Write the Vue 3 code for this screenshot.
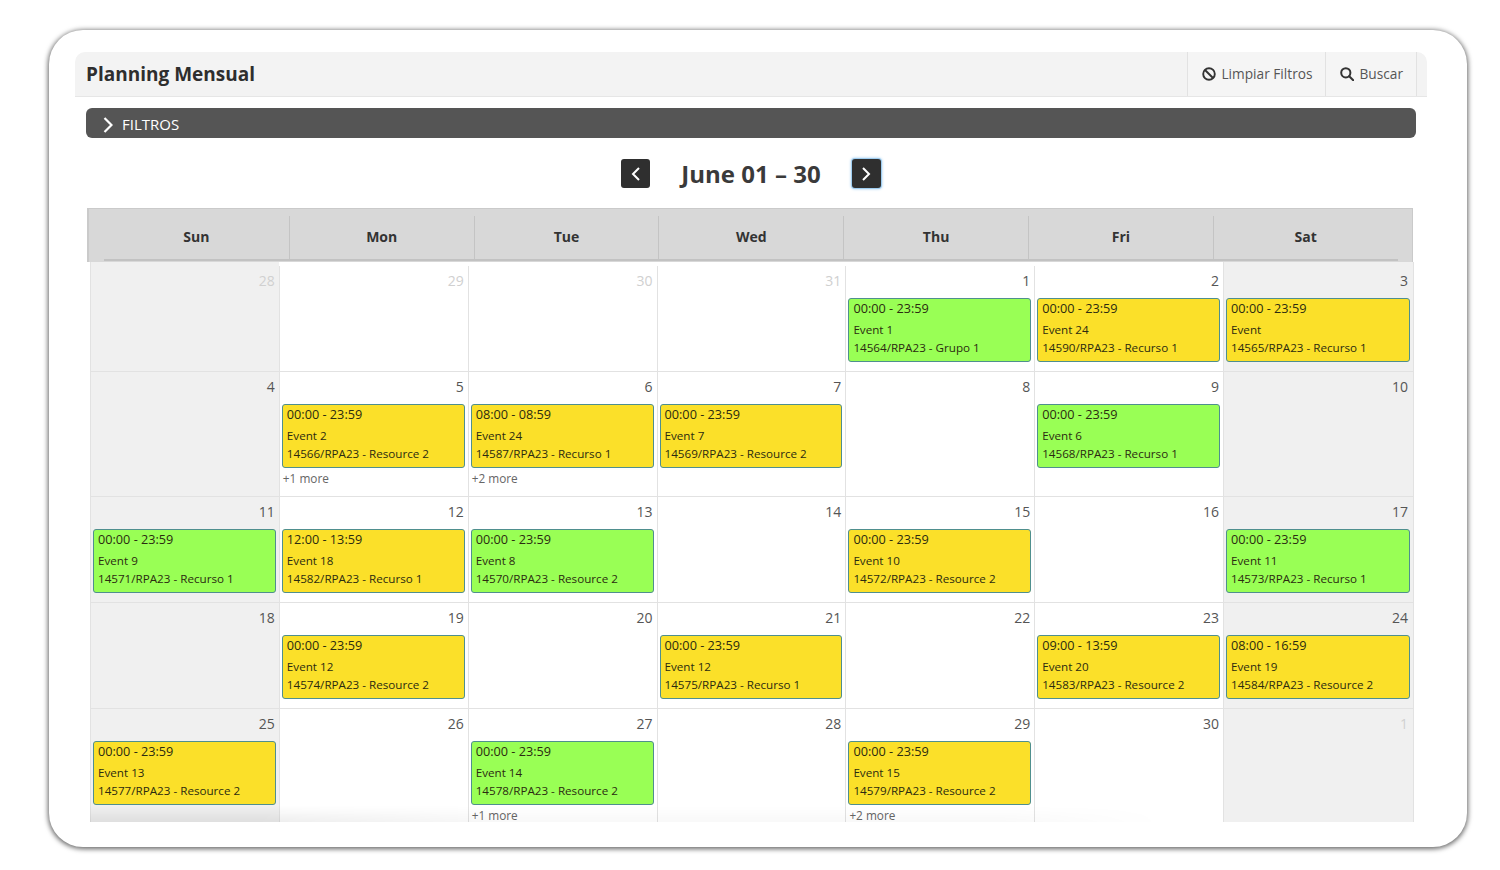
<script setup>
const dayNames = ['Sun', 'Mon', 'Tue', 'Wed', 'Thu', 'Fri', 'Sat']

const ev = (time, name, ref, color) => ({ time, name, ref, color })

const weeks = [
  [
    { n: 28, off: true }, { n: 29, off: true }, { n: 30, off: true }, { n: 31, off: true },
    { n: 1, event: ev('00:00 - 23:59', 'Event 1', '14564/RPA23 - Grupo 1', 'green') },
    { n: 2, event: ev('00:00 - 23:59', 'Event 24', '14590/RPA23 - Recurso 1', 'yellow') },
    { n: 3, event: ev('00:00 - 23:59', 'Event', '14565/RPA23 - Recurso 1', 'yellow') },
  ],
  [
    { n: 4 },
    { n: 5, event: ev('00:00 - 23:59', 'Event 2', '14566/RPA23 - Resource 2', 'yellow'), more: '+1 more' },
    { n: 6, event: ev('08:00 - 08:59', 'Event 24', '14587/RPA23 - Recurso 1', 'yellow'), more: '+2 more' },
    { n: 7, event: ev('00:00 - 23:59', 'Event 7', '14569/RPA23 - Resource 2', 'yellow') },
    { n: 8 },
    { n: 9, event: ev('00:00 - 23:59', 'Event 6', '14568/RPA23 - Recurso 1', 'green') },
    { n: 10 },
  ],
  [
    { n: 11, event: ev('00:00 - 23:59', 'Event 9', '14571/RPA23 - Recurso 1', 'green') },
    { n: 12, event: ev('12:00 - 13:59', 'Event 18', '14582/RPA23 - Recurso 1', 'yellow') },
    { n: 13, event: ev('00:00 - 23:59', 'Event 8', '14570/RPA23 - Resource 2', 'green') },
    { n: 14 },
    { n: 15, event: ev('00:00 - 23:59', 'Event 10', '14572/RPA23 - Resource 2', 'yellow') },
    { n: 16 },
    { n: 17, event: ev('00:00 - 23:59', 'Event 11', '14573/RPA23 - Recurso 1', 'green') },
  ],
  [
    { n: 18 },
    { n: 19, event: ev('00:00 - 23:59', 'Event 12', '14574/RPA23 - Resource 2', 'yellow') },
    { n: 20 },
    { n: 21, event: ev('00:00 - 23:59', 'Event 12', '14575/RPA23 - Recurso 1', 'yellow') },
    { n: 22 },
    { n: 23, event: ev('09:00 - 13:59', 'Event 20', '14583/RPA23 - Resource 2', 'yellow') },
    { n: 24, event: ev('08:00 - 16:59', 'Event 19', '14584/RPA23 - Resource 2', 'yellow') },
  ],
  [
    { n: 25, event: ev('00:00 - 23:59', 'Event 13', '14577/RPA23 - Resource 2', 'yellow') },
    { n: 26 },
    { n: 27, event: ev('00:00 - 23:59', 'Event 14', '14578/RPA23 - Resource 2', 'green'), more: '+1 more' },
    { n: 28 },
    { n: 29, event: ev('00:00 - 23:59', 'Event 15', '14579/RPA23 - Resource 2', 'yellow'), more: '+2 more' },
    { n: 30 },
    { n: 1, off: true },
  ],
]
</script>

<template>
  <div class="page">
    <div class="frame">
      <header class="topbar">
        <h1>Planning Mensual</h1>
        <div class="actions">
          <button class="action">
            <svg width="14" height="14" viewBox="0 0 14 14" fill="none" stroke="#333" stroke-width="1.9">
              <circle cx="7" cy="7" r="5.8" />
              <path d="M3 3l8 8" />
            </svg>
            Limpiar Filtros
          </button>
          <button class="action">
            <svg width="14" height="14" viewBox="0 0 14 14" fill="none" stroke="#333" stroke-width="2">
              <circle cx="5.8" cy="5.8" r="4.6" />
              <path d="M9.2 9.2l4 4" stroke-linecap="round" />
            </svg>
            Buscar
          </button>
        </div>
      </header>

      <div class="content">
        <div class="filters">
          <svg width="10" height="16" viewBox="0 0 10 16" fill="none" stroke="#fff" stroke-width="2.2">
            <path d="M1.5 1l7 7-7 7" />
          </svg>
          <span>FILTROS</span>
        </div>

        <div class="nav">
          <button class="nav-btn">
            <svg width="10" height="14" viewBox="0 0 10 14" fill="none" stroke="#fff" stroke-width="2">
              <path d="M8 1L2 7l6 6" />
            </svg>
          </button>
          <h2>June 01 – 30</h2>
          <button class="nav-btn focused">
            <svg width="10" height="14" viewBox="0 0 10 14" fill="none" stroke="#fff" stroke-width="2">
              <path d="M2 1l6 6-6 6" />
            </svg>
          </button>
        </div>

        <div class="calendar">
          <div class="head">
            <div class="head-row">
              <div v-for="day in dayNames" :key="day" class="head-cell">{{ day }}</div>
            </div>
          </div>

          <div class="body">
            <div v-for="(week, w) in weeks" :key="w" class="week">
              <div
                v-for="(cell, c) in week"
                :key="c"
                class="cell"
                :class="{ weekend: c === 0 || c === 6 }"
              >
                <div class="date" :class="{ off: cell.off }">{{ cell.n }}</div>
                <div v-if="cell.event" class="event" :class="cell.event.color">
                  <div class="time">{{ cell.event.time }}</div>
                  <div class="name">{{ cell.event.name }}</div>
                  <div class="ref">{{ cell.event.ref }}</div>
                </div>
                <div v-if="cell.more" class="more">{{ cell.more }}</div>
              </div>
            </div>
            <div class="fade"></div>
          </div>
        </div>
      </div>
    </div>
  </div>
</template>

<style scoped>
.page {
  box-sizing: border-box;
  height: 870px;
  padding: 30px 0 0 49px;
}

.frame {
  box-sizing: border-box;
  width: 1418px;
  height: 817px;
  padding: 22px 40px 0 26px;
  background: #fff;
  border-radius: 34px;
  box-shadow: 0 1px 5px 1px rgba(0, 0, 0, 0.6);
  overflow: hidden;
  color: #333;
}

.topbar {
  display: flex;
  justify-content: space-between;
  align-items: stretch;
  height: 45px;
  padding-left: 11px;
  padding-right: 10px;
  background: #f3f3f3;
  border-bottom: 1px solid #e6e6e6;
  border-radius: 10px 10px 0 0;
  box-sizing: border-box;
}

h1 {
  margin: 0;
  align-self: center;
  font-size: 19px;
  font-weight: 700;
  color: #2e2e2e;
}

.actions {
  display: flex;
}

.action {
  display: flex;
  align-items: center;
  gap: 5px;
  padding: 0 13px 1px 14px;
  border: 0;
  border-left: 1px solid #e2e2e2;
  background: #f5f5f5;
  font: 13.7px "Open Sans", sans-serif;
  color: #555;
}

.action:last-child {
  border-right: 1px solid #e2e2e2;
}

.content {
  padding: 11px 11px 0;
}

.filters {
  display: flex;
  align-items: center;
  gap: 9px;
  height: 30px;
  padding-left: 17px;
  background: #555;
  border-radius: 6px;
  color: #fff;
  font-size: 15px;
  box-sizing: border-box;
}

.filters svg {
  margin-top: 3px;
}

.filters span {
  padding-top: 1px;
}

.nav {
  display: flex;
  justify-content: center;
  align-items: center;
  gap: 31px;
  height: 29px;
  margin: 21px 0 20px;
}

.nav-btn {
  display: flex;
  align-items: center;
  justify-content: center;
  width: 29px;
  height: 29px;
  padding: 0;
  border: 0;
  border-radius: 3px;
  background: #2f2f2f;
}

.nav-btn.focused {
  box-shadow: 0 0 0 1px #9fcdf0, 0 0 3px 1px #9fcdf0;
}

h2 {
  margin: 0;
  font-size: 24px;
  font-weight: 700;
  color: #3a3a3a;
}

.calendar {
  margin-left: 1px;
  width: 1326px;
}

.head {
  box-sizing: border-box;
  height: 54px;
  padding: 7px 14px 0 15px;
  background: #d8d8d8;
  border-top: 1px solid #cacaca;
  border-left: 2px solid #cacaca;
  border-right: 1px solid #cacaca;
}

.head-row {
  display: grid;
  grid-template-columns: repeat(7, 184.8px);
  height: 43px;
  border-bottom: 2px solid #c2c2c2;
}

.head-cell {
  display: flex;
  align-items: center;
  justify-content: center;
  padding-bottom: 3px;
  font-size: 14px;
  font-weight: 700;
  color: #333;
  border-left: 1px solid #c4c4c4;
}

.head-cell:first-child {
  border-left: 0;
}

.body {
  position: relative;
  margin-left: 3px;
  width: 1323px;
  border-right: 1px solid #e2e2e2;
  height: 560px;
  overflow: hidden;
}

.fade {
  position: absolute;
  left: 0;
  bottom: 0;
  width: 1075px;
  height: 16px;
  background: linear-gradient(to bottom, rgba(0, 0, 0, 0), rgba(0, 0, 0, 0.07));
  -webkit-mask-image: linear-gradient(to right, #000 15%, rgba(0, 0, 0, 0.35) 40%, rgba(0, 0, 0, 0.35) 85%, transparent);
  mask-image: linear-gradient(to right, #000 15%, rgba(0, 0, 0, 0.35) 40%, rgba(0, 0, 0, 0.35) 85%, transparent);
  pointer-events: none;
}

.week {
  display: grid;
  grid-template-columns: repeat(6, 188.85px) 1fr;
  min-height: 106px;
  border-bottom: 1px solid #e2e2e2;
  box-sizing: border-box;
}

.week:first-child {
  padding-top: 4px;
  min-height: 110px;
}

.cell {
  box-sizing: border-box;
  padding: 0 3px 0 2px;
  border-left: 1px solid #e2e2e2;
  min-width: 0;
}

.cell.weekend {
  background: #f0f0f0;
}

.week:first-child .cell.weekend {
  margin-top: -4px;
  padding-top: 4px;
}

.date {
  height: 32px;
  padding-right: 1px;
  padding-top: 5px;
  box-sizing: border-box;
  text-align: right;
  font-size: 14px;
  line-height: 20px;
  color: #555;
}

.cell:last-child .date {
  padding-right: 2px;
}

.date.off {
  color: #d0d0d0;
}

.event {
  box-sizing: border-box;
  height: 64px;
  padding: 0 4px;
  border: 1px solid #4f8f8e;
  border-radius: 3px;
  color: #2b2b10;
  font-size: 11.65px;
  line-height: 18px;
}

.event.yellow {
  background: #fbe029;
}

.event.green {
  background: #99ff55;
}

.time {
  font-size: 12.7px;
  margin-bottom: 4px;
}

.more {
  box-sizing: border-box;
  height: 28px;
  padding: 3px 0 0 1px;
  font-size: 11.8px;
  line-height: 14px;
  color: #666;
}
</style>

<style>
body {
  font-family: "Open Sans", sans-serif;
}
</style>
